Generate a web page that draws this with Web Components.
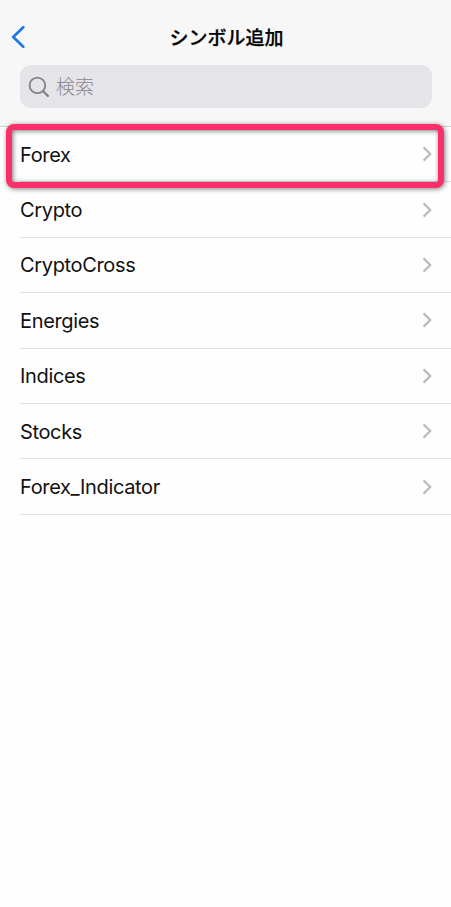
<!DOCTYPE html>
<html lang="ja">
<head>
<meta charset="utf-8">
<meta name="viewport" content="width=device-width, initial-scale=1">
<title>シンボル追加</title>
<style>
    body {
        margin: 0;
        background: #fefefe;
        color: #111;
        font-family: Inter, "Noto Sans CJK JP", sans-serif;
        overflow: hidden;
    }
</style>
</head>
<body>
<symbol-screen></symbol-screen>

<script>
class NavHeader extends HTMLElement {
    connectedCallback() {
        this.attachShadow({ mode: 'open' });
        this.shadowRoot.innerHTML = `
            <style>
                :host {
                    display: block;
                    box-sizing: border-box;
                    height: 127px;
                    padding: 9px 19px 0 20px;
                    background: #f7f7f7;
                    border-bottom: 1px solid #cfcfcf;
                }
                .bar {
                    display: grid;
                    grid-template-columns: 31px 1fr 29px;
                    align-items: center;
                    height: 56px;
                    margin: 0 -9px 0 -10px;
                }
                svg {
                    display: block;
                }
                .title {
                    margin: 0;
                    color: #000;
                    font: 500 19px/28px "Noto Sans CJK JP", sans-serif;
                    -webkit-text-stroke: 0.25px #000;
                    text-align: center;
                }
            </style>
            <div class="bar">
                <svg width="18" height="26" viewBox="0 0 18 26" fill="none" stroke="#1c78e2" stroke-width="2.7" stroke-linecap="round" stroke-linejoin="round">
                    <path d="M13.3 3.3 3.2 13l10.1 9.8"/>
                </svg>
                <h1 class="title"><slot></slot></h1>
            </div>
            <slot name="search"></slot>
        `;
    }
}
customElements.define('nav-header', NavHeader);

class SearchField extends HTMLElement {
    connectedCallback() {
        this.attachShadow({ mode: 'open' });
        this.shadowRoot.innerHTML = `
            <style>
                :host {
                    display: flex;
                    align-items: center;
                    gap: 6px;
                    box-sizing: border-box;
                    height: 43px;
                    padding-left: 8px;
                    border-radius: 11px;
                    background: #e5e5e9;
                    color: #88888c;
                    font: 300 19px/28px "Noto Sans CJK JP", sans-serif;
                }
                span {
                    padding-bottom: 1px;
                }
            </style>
            <svg width="22" height="22" viewBox="0 0 22 22" fill="none" stroke="#838387" stroke-width="1.8" stroke-linecap="round">
                <circle cx="9.4" cy="9.4" r="7.8"/>
                <path d="m15.2 15.2 4.7 4.7" stroke-width="2.3"/>
            </svg>
            <span><slot></slot></span>
        `;
    }
}
customElements.define('search-field', SearchField);

class SymbolRow extends HTMLElement {
    connectedCallback() {
        this.attachShadow({ mode: 'open' });
        this.shadowRoot.innerHTML = `
            <style>
                :host {
                    display: flex;
                    align-items: center;
                    justify-content: space-between;
                    box-sizing: border-box;
                    height: 55.4px;
                    margin-left: 20px;
                    padding-right: 18px;
                    border-bottom: 1px solid #e2e2e2;
                    font-size: 20px;
                    line-height: 26px;
                    letter-spacing: -0.35px;
                }
                span {
                    padding-top: 1px;
                }
            </style>
            <span><slot></slot></span>
            <svg width="12" height="18" viewBox="0 0 12 18" fill="none" stroke="#bbbbbd" stroke-width="2.2">
                <path d="m2.6 2.4 6.6 6.6-6.6 6.6"/>
            </svg>
        `;
    }
}
customElements.define('symbol-row', SymbolRow);

// Marker frame drawn over the first row
class HighlightFrame extends HTMLElement {
    connectedCallback() {
        this.attachShadow({ mode: 'open' });
        this.shadowRoot.innerHTML = `
            <style>
                :host {
                    position: absolute;
                    top: -3px;
                    left: 5.5px;
                    box-sizing: border-box;
                    width: 438px;
                    height: 63.5px;
                    border: 6px solid #fb2f6a;
                    border-radius: 8px;
                    filter: drop-shadow(1px 1.5px 2.5px rgba(0, 0, 0, 0.5));
                    pointer-events: none;
                }
            </style>
        `;
    }
}
customElements.define('highlight-frame', HighlightFrame);

class SymbolScreen extends HTMLElement {
    connectedCallback() {
        const symbols = ['Forex', 'Crypto', 'CryptoCross', 'Energies', 'Indices', 'Stocks', 'Forex_Indicator'];
        this.attachShadow({ mode: 'open' });
        this.shadowRoot.innerHTML = `
            <style>
                :host {
                    display: block;
                    min-height: 907px;
                }
                .list {
                    position: relative;
                }
            </style>
            <nav-header>
                シンボル追加
                <search-field slot="search">検索</search-field>
            </nav-header>
            <div class="list">
                ${symbols.map(name => `<symbol-row>${name}</symbol-row>`).join('')}
                <highlight-frame></highlight-frame>
            </div>
        `;
    }
}
customElements.define('symbol-screen', SymbolScreen);
</script>
</body>
</html>
